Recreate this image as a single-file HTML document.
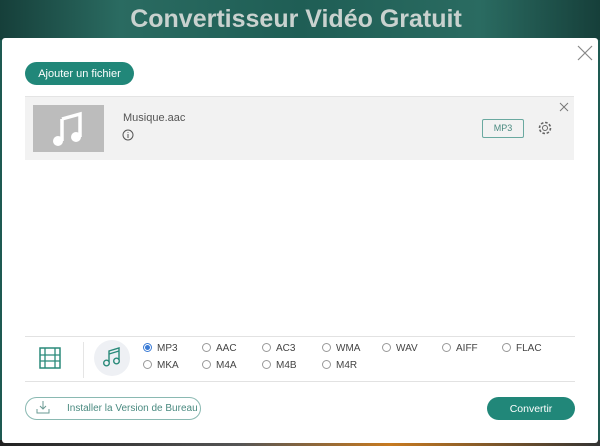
<!DOCTYPE html><html><head><style>
body{margin:0;width:600px;height:446px;overflow:hidden;position:relative;font-family:"Liberation Sans",sans-serif;background:#1e5a52}
.top{position:absolute;left:0;top:0;width:600px;height:40px;background:linear-gradient(90deg,#163f3a,#2a6b61 20%,#1f5e55 50%,#2a6b61 80%,#163f3a)}
.title{position:absolute;top:5px;left:-4px;width:600px;text-align:center;color:#c9d2cf;font-size:25px;font-weight:bold}
.bot{position:absolute;left:0;top:440px;width:600px;height:6px;background:linear-gradient(90deg,#222,#555 40%,#c77a20 65%,#333)}
.modal{position:absolute;left:2px;top:38px;width:596px;height:405px;background:#fff;border-radius:3px}
.abs{position:absolute}
.btn{background:#218779;color:#fff;border-radius:12px;font-size:11px;text-align:center;line-height:24px}
.radio{position:absolute;font-size:10px;color:#444}
.radio i{display:inline-block;width:7px;height:7px;border:1px solid #999;border-radius:50%;margin-right:5px;vertical-align:-1px}
.radio i.on{border-color:#3a7bd5;background:radial-gradient(#3a7bd5 45%,#fff 55%)}
</style></head><body>
<div class="top"></div><div class="title">Convertisseur Vidéo Gratuit</div>
<div class="bot"></div>
<div class="modal">
<svg class="abs" style="left:575px;top:7px" width="16" height="16"><path d="M1 1L15 15M15 1L1 15" stroke="#888" stroke-width="1.2"/></svg>
<div class="abs btn" style="left:23px;top:24px;width:109px;height:23px">Ajouter un fichier</div>
<div class="abs" style="left:23px;top:58px;width:549px;height:63px;background:#f2f2f2;border-top:1px solid #e4e4e4"></div>
<div class="abs" style="left:31px;top:67px;width:71px;height:47px;background:#bcbcbc"></div>
<svg class="abs" style="left:50px;top:73px" width="32" height="36"><path d="M10 8L28 3V26" stroke="#fff" stroke-width="3.5" fill="none"/><path d="M10 8V30" stroke="#fff" stroke-width="3.5"/><circle cx="6" cy="30" r="5" fill="#fff"/><circle cx="24" cy="26" r="5" fill="#fff"/></svg>
<div class="abs" style="left:121px;top:74px;font-size:11px;color:#555">Musique.aac</div>
<svg class="abs" style="left:120px;top:91px" width="12" height="12"><circle cx="6" cy="6" r="5" fill="none" stroke="#555"/><path d="M6 5V9M6 3.2V4" stroke="#555"/></svg>
<div class="abs" style="left:480px;top:81px;width:40px;height:17px;border:1px solid #6aa9a0;border-radius:2px;font-size:9px;color:#4a8a80;text-align:center;line-height:17px">MP3</div>
<svg class="abs" style="left:535px;top:82px" width="16" height="16"><circle cx="8" cy="8" r="2.5" fill="none" stroke="#666"/><circle cx="8" cy="8" r="5.5" fill="none" stroke="#666" stroke-width="1.6" stroke-dasharray="2.6 1.7"/></svg>
<svg class="abs" style="left:557px;top:64px" width="10" height="10"><path d="M1 1L9 9M9 1L1 9" stroke="#777"/></svg>
<div class="abs" style="left:23px;top:298px;width:550px;height:1px;background:#e2e2e2"></div>
<div class="abs" style="left:23px;top:343px;width:550px;height:1px;background:#e2e2e2"></div>
<svg class="abs" style="left:37px;top:309px" width="22" height="22"><rect x="1" y="1" width="20" height="20" fill="none" stroke="#2a8a7a" stroke-width="1.5"/><path d="M6 1V21M16 1V21M1 8H21M1 14H21" stroke="#2a8a7a" stroke-width="1.3"/></svg>
<div class="abs" style="left:81px;top:304px;width:1px;height:36px;background:#e5e5e5"></div>
<div class="abs" style="left:92px;top:302px;width:36px;height:36px;border-radius:50%;background:#eef0f4"></div>
<svg class="abs" style="left:100px;top:308px" width="20" height="22"><path d="M7 16V5L17 2V14" stroke="#2a8a7a" stroke-width="1.4" fill="none"/><circle cx="4.5" cy="17" r="2.8" fill="none" stroke="#2a8a7a" stroke-width="1.4"/><circle cx="14.5" cy="15" r="2.8" fill="none" stroke="#2a8a7a" stroke-width="1.4"/><path d="M7 8L17 5" stroke="#2a8a7a" stroke-width="1.4"/></svg>
<div class="radio" style="left:141px;top:305px"><i class="on"></i>MP3</div>
<div class="radio" style="left:200px;top:305px"><i></i>AAC</div>
<div class="radio" style="left:260px;top:305px"><i></i>AC3</div>
<div class="radio" style="left:320px;top:305px"><i></i>WMA</div>
<div class="radio" style="left:380px;top:305px"><i></i>WAV</div>
<div class="radio" style="left:440px;top:305px"><i></i>AIFF</div>
<div class="radio" style="left:500px;top:305px"><i></i>FLAC</div>
<div class="radio" style="left:141px;top:322px"><i></i>MKA</div>
<div class="radio" style="left:200px;top:322px"><i></i>M4A</div>
<div class="radio" style="left:260px;top:322px"><i></i>M4B</div>
<div class="radio" style="left:320px;top:322px"><i></i>M4R</div>
<div class="abs" style="left:23px;top:359px;width:174px;height:21px;border:1px solid #8ab9b2;border-radius:12px"></div>
<svg class="abs" style="left:34px;top:362px" width="14" height="14"><path d="M7 1V9M4 6L7 9L10 6M1 9V13H13V9" stroke="#6a9a93" fill="none"/></svg>
<div class="abs" style="left:65px;top:365px;font-size:10px;color:#4a8a80">Installer la Version de Bureau</div>
<div class="abs btn" style="left:485px;top:359px;width:88px;height:23px;font-size:10.5px">Convertir</div>
</div>
</body></html>
